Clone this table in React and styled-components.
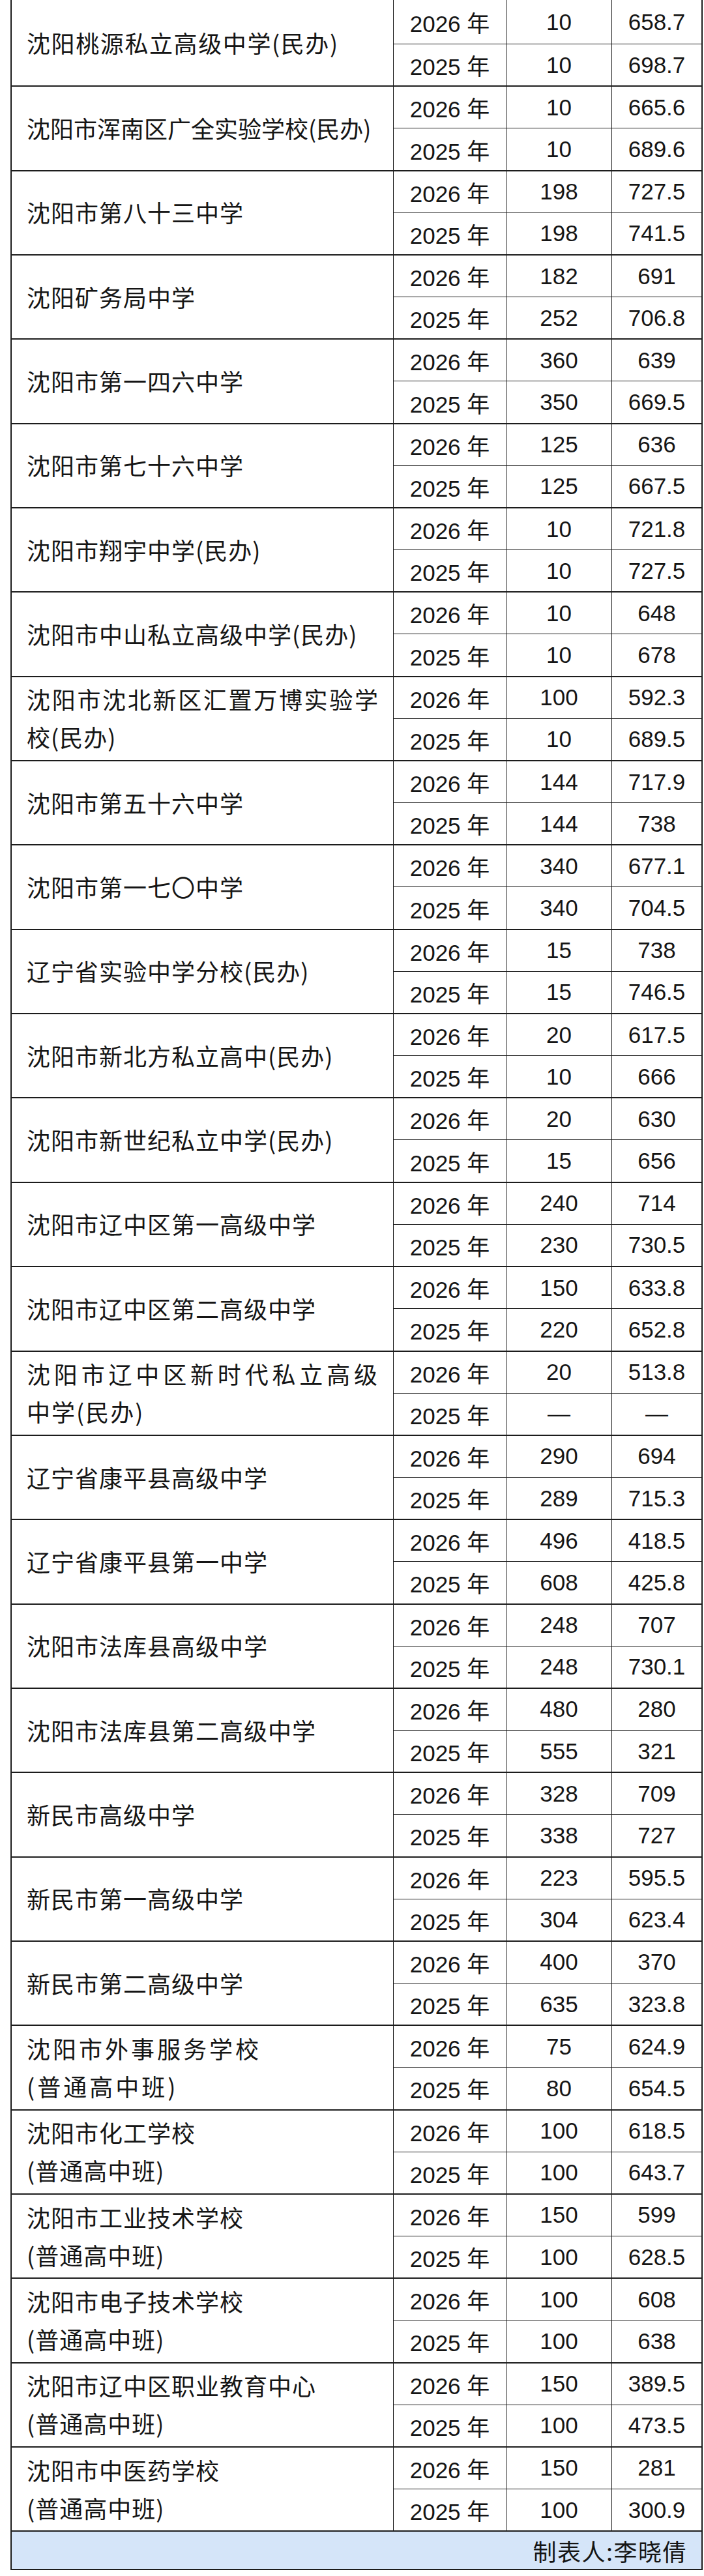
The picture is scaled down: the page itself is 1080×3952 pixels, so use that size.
import React from "react";
import styled, { createGlobalStyle } from "styled-components";

const GlobalStyle = createGlobalStyle`
  * {
    box-sizing: border-box;
  }
  body {
    margin: 0;
    background: #ffffff;
    color: #151515;
  }
`;

const Page = styled.div`
  width: 1080px;
  padding-left: 16px;
`;

const Table = styled.div`
  width: 1062px;
  border-left: 2px solid #1c1c1c;
  border-right: 2px solid #1c1c1c;
  border-bottom: 2px solid #1c1c1c;
`;

const Group = styled.div`
  display: grid;
  grid-template-columns: 586px 173px 162px 1fr;
  grid-template-rows: ${(p) => (p.$first ? "68px" : "64px")} 63.35px;
  border-bottom: 2px solid #1c1c1c;
`;

const NameCell = styled.div`
  grid-row: 1 / span 2;
  display: flex;
  flex-direction: column;
  justify-content: center;
  padding: 0 22px 2px 23px;
  border-right: 1px solid #1c1c1c;
  font-family: "Noto Sans CJK SC", "Noto Sans", sans-serif;
  font-size: 36px;
`;

const NameLine = styled.div`
  line-height: 58px;
  white-space: nowrap;
  letter-spacing: ${(p) => p.$spacing}px;
  text-align: ${(p) => (p.$fill ? "justify" : "left")};
  text-align-last: ${(p) => (p.$fill ? "justify" : "auto")};
`;

const ValueCell = styled.div`
  display: flex;
  align-items: center;
  justify-content: center;
  font-family: "Liberation Sans", "Noto Sans CJK SC", sans-serif;
  font-size: 35px;
  border-right: ${(p) => (p.$last ? "none" : "1px solid #1c1c1c")};
  border-bottom: ${(p) => (p.$top ? "1px solid #1c1c1c" : "none")};
`;

const Footer = styled.div`
  height: 57px;
  display: flex;
  align-items: center;
  justify-content: flex-end;
  padding-right: 22px;
  background: #d5e5f9;
  font-family: "Noto Sans CJK SC", "Noto Sans", sans-serif;
  font-size: 36px;
  letter-spacing: 1.5px;
`;

const schools = [
  { lines: ["沈阳桃源私立高级中学(民办)"], spacing: 1.6, rows: [["10", "658.7"], ["10", "698.7"]] },
  { lines: ["沈阳市浑南区广全实验学校(民办)"], spacing: 0, rows: [["10", "665.6"], ["10", "689.6"]] },
  { lines: ["沈阳市第八十三中学"], rows: [["198", "727.5"], ["198", "741.5"]] },
  { lines: ["沈阳矿务局中学"], rows: [["182", "691"], ["252", "706.8"]] },
  { lines: ["沈阳市第一四六中学"], rows: [["360", "639"], ["350", "669.5"]] },
  { lines: ["沈阳市第七十六中学"], rows: [["125", "636"], ["125", "667.5"]] },
  { lines: ["沈阳市翔宇中学(民办)"], rows: [["10", "721.8"], ["10", "727.5"]] },
  { lines: ["沈阳市中山私立高级中学(民办)"], rows: [["10", "648"], ["10", "678"]] },
  { lines: ["沈阳市沈北新区汇置万博实验学", "校(民办)"], fill: true, rows: [["100", "592.3"], ["10", "689.5"]] },
  { lines: ["沈阳市第五十六中学"], rows: [["144", "717.9"], ["144", "738"]] },
  { lines: ["沈阳市第一七〇中学"], rows: [["340", "677.1"], ["340", "704.5"]] },
  { lines: ["辽宁省实验中学分校(民办)"], rows: [["15", "738"], ["15", "746.5"]] },
  { lines: ["沈阳市新北方私立高中(民办)"], rows: [["20", "617.5"], ["10", "666"]] },
  { lines: ["沈阳市新世纪私立中学(民办)"], rows: [["20", "630"], ["15", "656"]] },
  { lines: ["沈阳市辽中区第一高级中学"], rows: [["240", "714"], ["230", "730.5"]] },
  { lines: ["沈阳市辽中区第二高级中学"], rows: [["150", "633.8"], ["220", "652.8"]] },
  { lines: ["沈阳市辽中区新时代私立高级", "中学(民办)"], fill: true, spacing: 2, rows: [["20", "513.8"], ["—", "—"]] },
  { lines: ["辽宁省康平县高级中学"], rows: [["290", "694"], ["289", "715.3"]] },
  { lines: ["辽宁省康平县第一中学"], rows: [["496", "418.5"], ["608", "425.8"]] },
  { lines: ["沈阳市法库县高级中学"], rows: [["248", "707"], ["248", "730.1"]] },
  { lines: ["沈阳市法库县第二高级中学"], rows: [["480", "280"], ["555", "321"]] },
  { lines: ["新民市高级中学"], rows: [["328", "709"], ["338", "727"]] },
  { lines: ["新民市第一高级中学"], rows: [["223", "595.5"], ["304", "623.4"]] },
  { lines: ["新民市第二高级中学"], rows: [["400", "370"], ["635", "323.8"]] },
  { lines: ["沈阳市外事服务学校", "(普通高中班)"], spacing: 4, rows: [["75", "624.9"], ["80", "654.5"]] },
  { lines: ["沈阳市化工学校", "(普通高中班)"], rows: [["100", "618.5"], ["100", "643.7"]] },
  { lines: ["沈阳市工业技术学校", "(普通高中班)"], rows: [["150", "599"], ["100", "628.5"]] },
  { lines: ["沈阳市电子技术学校", "(普通高中班)"], rows: [["100", "608"], ["100", "638"]] },
  { lines: ["沈阳市辽中区职业教育中心", "(普通高中班)"], rows: [["150", "389.5"], ["100", "473.5"]] },
  { lines: ["沈阳市中医药学校", "(普通高中班)"], rows: [["150", "281"], ["100", "300.9"]] },
];

const years = ["2026 年", "2025 年"];

function App() {
  return (
    <Page>
      <GlobalStyle />
      <Table>
        {schools.map((school, i) => (
          <Group key={school.lines.join("")} $first={i === 0}>
            <NameCell>
              {school.lines.map((line, j) => (
                <NameLine
                  key={line}
                  $fill={school.fill && j === 0}
                  $spacing={school.spacing ?? 1}
                >
                  {line}
                </NameLine>
              ))}
            </NameCell>
            {school.rows.map((row, r) => (
              <React.Fragment key={years[r]}>
                <ValueCell $top={r === 0}>{years[r]}</ValueCell>
                <ValueCell $top={r === 0}>{row[0]}</ValueCell>
                <ValueCell $top={r === 0} $last>
                  {row[1]}
                </ValueCell>
              </React.Fragment>
            ))}
          </Group>
        ))}
        <Footer>制表人:李晓倩</Footer>
      </Table>
    </Page>
  );
}

export default App;
